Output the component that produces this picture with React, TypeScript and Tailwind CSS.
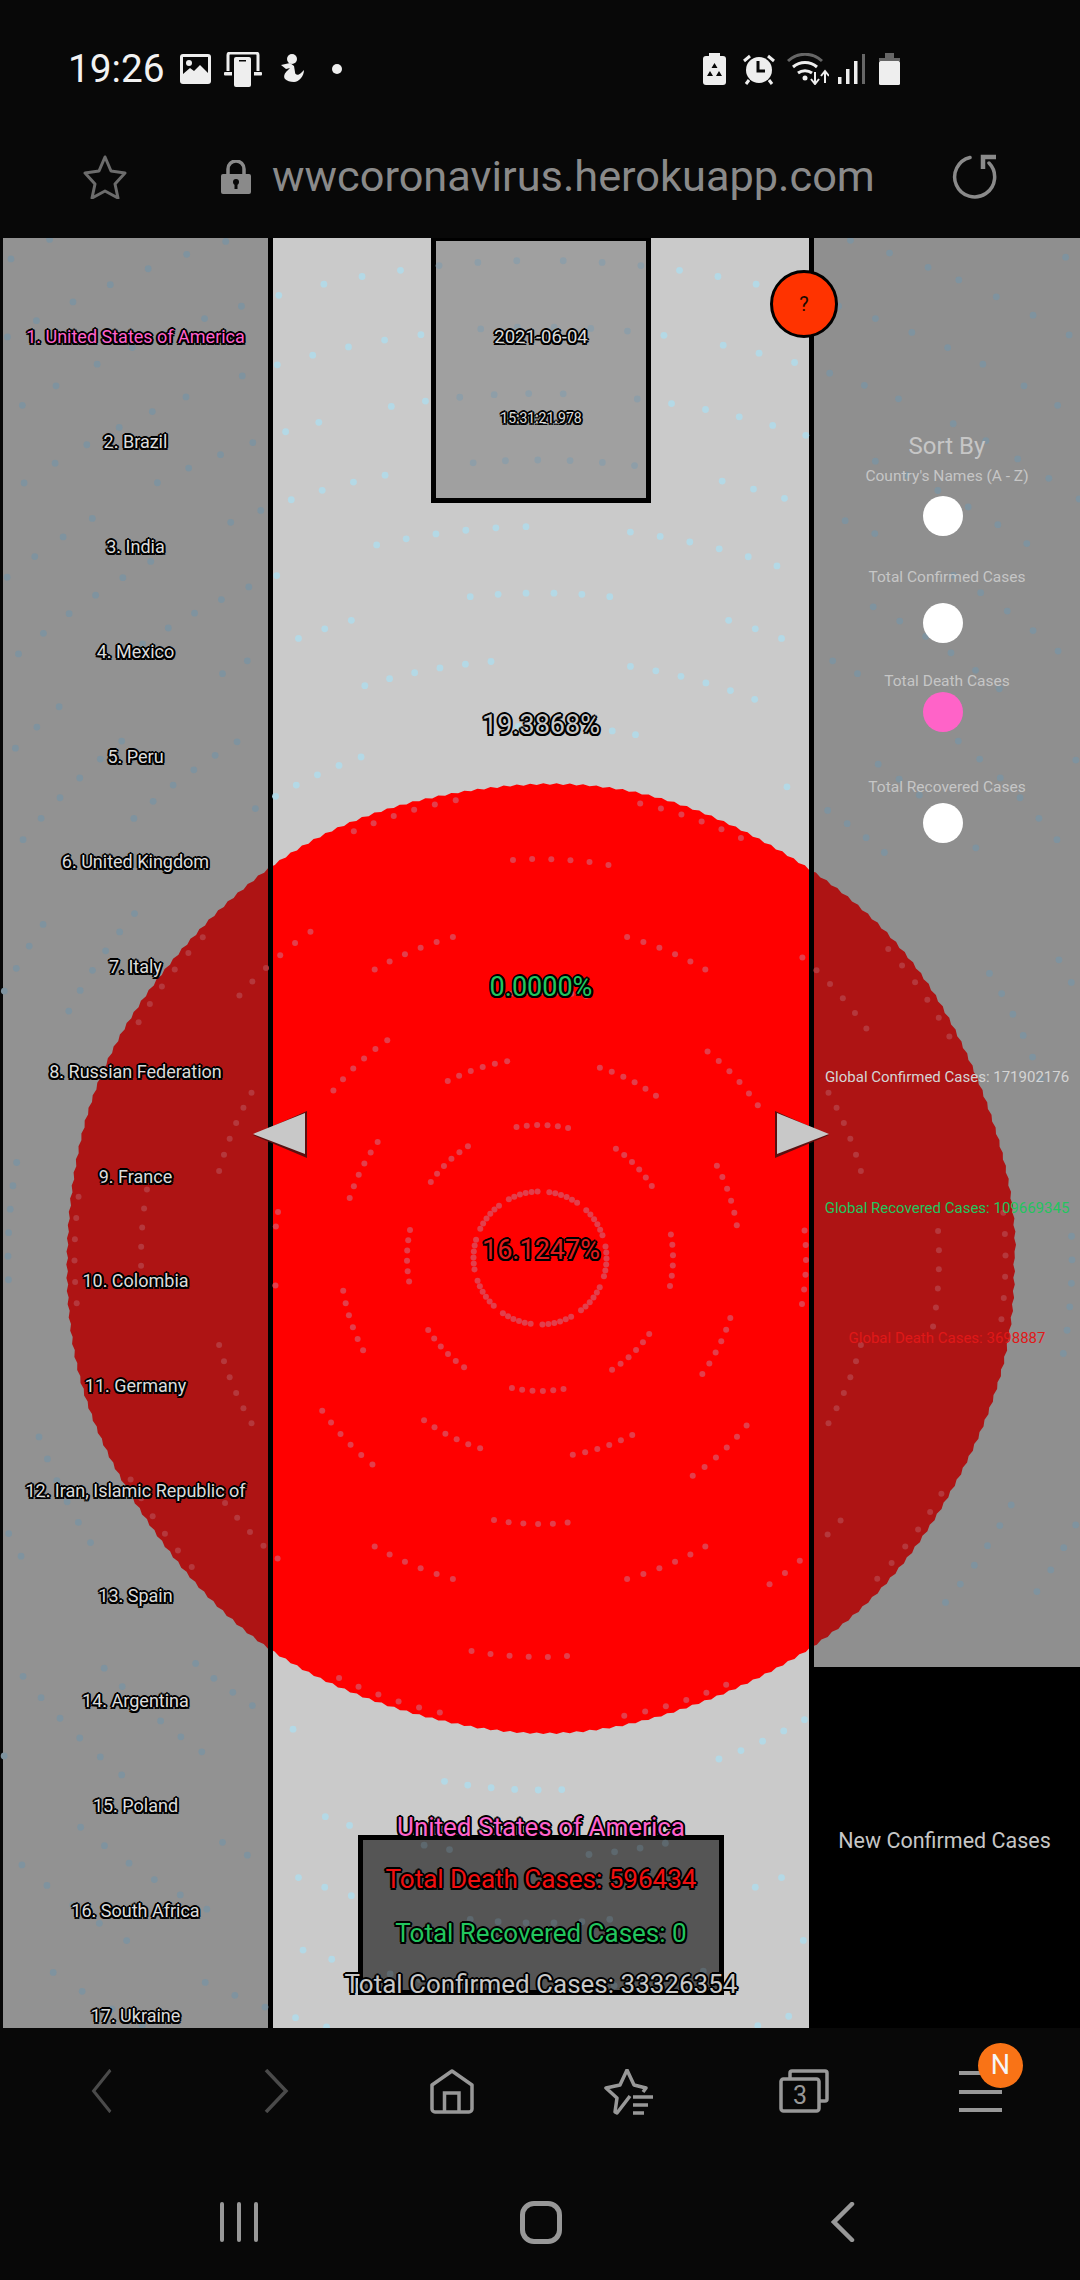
import React from "react";

const outline =
  "[text-shadow:2px_0_#000,-2px_0_#000,0_2px_#000,0_-2px_#000,1.5px_1.5px_#000,-1.5px_1.5px_#000,1.5px_-1.5px_#000,-1.5px_-1.5px_#000]";

const countries = [
  "1. United States of America",
  "2. Brazil",
  "3. India",
  "4. Mexico",
  "5. Peru",
  "6. United Kingdom",
  "7. Italy",
  "8. Russian Federation",
  "9. France",
  "10. Colombia",
  "11. Germany",
  "12. Iran, Islamic Republic of",
  "13. Spain",
  "14. Argentina",
  "15. Poland",
  "16. South Africa",
  "17. Ukraine",
];

// chart centre, in the coordinates of the main area
const CX = 540;
const CY = 1020;
const R = 474;

const circlePoints = (() => {
  const pts: string[] = [];
  const total = 450;
  for (let i = 0; i < total; i++) {
    const a = (i / total) * Math.PI * 2;
    const r = R + (i % 2 === 0 ? 0.8 : -0.8) + Math.sin(i * 0.13) * 1.4;
    pts.push(`${(CX + Math.cos(a) * r).toFixed(1)},${(CY + Math.sin(a) * r).toFixed(1)}`);
  }
  return pts.join(" ");
})();

function dotColor(x: number, y: number, inCircle: boolean) {
  if (x < 3 || x > 1080 || y < 0 || y > 1790) return null;
  if ((x > 266 && x < 275) || (x > 807 && x < 816)) return null;
  if (x > 809 && y > 1429) return null;
  const center = x > 273 && x < 809;
  if (inCircle) return center ? "#e23f4c" : "#b5383c";
  if (x > 427 && x < 655 && y < 269) {
    return x > 437 && x < 645 && y < 259 ? "#8e9ea8" : null;
  }
  if (x > 353 && x < 729 && y > 1592 && y < 1762) {
    return x > 363 && x < 719 && y > 1602 && y < 1752 ? "#5d686e" : null;
  }
  return center ? "#b4d9e6" : "#7f939f";
}

const dots = (() => {
  const out: { x: number; y: number; r: number; fill: string }[] = [];
  for (let k = 1; k <= 20; k++) {
    const ringR = k * 66.5;
    const n = k === 1 ? 10 : 8 + Math.max(0, k - 6) * 2;
    const spacing = k === 1 ? 6 : 6 + ringR * 0.033;
    const step = ((spacing / ringR) * 180) / Math.PI;
    const offset = k % 2 === 0 ? 0 : 180 / n;
    for (let d = 0; d < n; d++) {
      const mid = -90 + offset + (d * 360) / n + (k * 3) % 5;
      for (let i = 0; i < 6; i++) {
        const a = ((mid + (i - 2.5) * step) * Math.PI) / 180;
        const x = CX + Math.cos(a) * ringR;
        const y = CY + Math.sin(a) * ringR;
        const inCircle = ringR < R - 6;
        const fill = dotColor(x, y, inCircle);
        if (fill) out.push({ x, y, r: inCircle ? 3 : 3.4, fill });
      }
    }
  }
  return out;
})();

function Chart() {
  return (
    <svg className="absolute left-0 top-0 z-10 pointer-events-none" width={1080} height={1790}>
      <defs>
        <clipPath id="sides">
          <rect x={0} y={0} width={268} height={1790} />
          <rect x={814} y={0} width={266} height={1790} />
        </clipPath>
        <clipPath id="middle">
          <rect x={273} y={0} width={536} height={1790} />
        </clipPath>
      </defs>
      <polygon points={circlePoints} fill="#ae1414" clipPath="url(#sides)" />
      <polygon points={circlePoints} fill="#ff0000" clipPath="url(#middle)" />
      {dots.map((d, i) => (
        <circle key={i} cx={d.x} cy={d.y} r={d.r} fill={d.fill} />
      ))}
    </svg>
  );
}

function StatusLeft() {
  return (
    <>
      <svg width={31} height={30} viewBox="0 0 31 30" className="ml-[18px]">
        <rect width={31} height={30} rx={3} fill="#eee" />
        <rect x={3} y={3} width={25} height={22} fill="#080808" />
        <circle cx={9} cy={9} r={3} fill="#eee" />
        <path d="M3 20l7-6 4 3 6-6 8 8v8H3z" fill="#eee" />
      </svg>
      <svg width={38} height={35} viewBox="0 0 38 35" className="ml-[13px]">
        <path d="M4 19V3a2 2 0 0 1 2-2h26a2 2 0 0 1 2 2v16" fill="none" stroke="#eee" strokeWidth={3} />
        <rect x={0} y={20} width={38} height={3.5} rx={1} fill="#eee" />
        <rect x={8} y={4} width={22} height={31} rx={2} fill="#080808" />
        <rect x={10} y={5} width={17} height={30} rx={2} fill="#eee" />
        <rect x={15} y={8} width={7} height={1.5} fill="#080808" />
      </svg>
      <svg width={26} height={32} viewBox="0 0 26 32" className="ml-[16px]">
        <circle cx={14} cy={6} r={5} fill="#eee" />
        <path d="M3 12l9-2 4 3 1 6c0 3 3 4 6 1l3-3c0 6-5 12-10 12-4 0-7-1-9-3-2-3 0-6 2-8l3-3-4 1z" fill="#eee" />
      </svg>
      <span className="ml-[28px] w-[10px] h-[10px] rounded-full bg-[#eee]" />
    </>
  );
}

function StatusRight() {
  return (
    <div className="ml-auto mr-[180px] flex items-center">
      <svg width={23} height={32} viewBox="0 0 23 32">
        <rect x={6} y={0} width={11} height={4} fill="#eee" />
        <rect x={0} y={3} width={23} height={29} rx={3} fill="#eee" />
        <path d="M11.5 10l3 5h-6zM7 18l-3 5h6zM16 18l3 5h-6z" fill="#080808" />
      </svg>
      <svg width={34} height={32} viewBox="0 0 34 32" className="ml-[16px]">
        <circle cx={17} cy={17} r={13} fill="#eee" />
        <path d="M16 8v10h7" fill="none" stroke="#080808" strokeWidth={3} />
        <path d="M2 8l6-5M32 8l-6-5M7 27l-3 4M27 27l3 4" stroke="#eee" strokeWidth={3} />
      </svg>
      <svg width={42} height={32} viewBox="0 0 42 32" className="ml-[11px]">
        <path d="M1 8c10-9 24-9 34 0" fill="none" stroke="#666" strokeWidth={3} />
        <path d="M6 14c7-6 17-6 24 0M11 20c4-3 10-3 14 0" fill="none" stroke="#eee" strokeWidth={3} />
        <circle cx={18} cy={25} r={2.5} fill="#eee" />
        <path d="M28 19v11M24 26l4 5 4-5M38 30V19M34 23l4-5 4 5" fill="none" stroke="#eee" strokeWidth={2} />
      </svg>
      <svg width={27} height={30} viewBox="0 0 27 30" className="ml-[9px]">
        <rect x={0} y={23} width={3.5} height={7} fill="#eee" />
        <rect x={8} y={15} width={3.5} height={15} fill="#eee" />
        <rect x={16} y={7} width={3.5} height={23} fill="#eee" />
        <rect x={24} y={0} width={3} height={30} fill="#666" />
      </svg>
      <svg width={21} height={32} viewBox="0 0 21 32" className="ml-[14px]">
        <rect x={6} y={0} width={9} height={5} fill="#666" />
        <rect x={0} y={5} width={21} height={3} fill="#666" />
        <rect x={0} y={8} width={21} height={24} rx={1.5} fill="#eee" />
      </svg>
    </div>
  );
}

function UrlBar() {
  return (
    <div className="mt-[68px] h-[44px] pl-[83px] flex items-center">
      <svg width={44} height={44} viewBox="0 0 44 44" fill="none" stroke="#6c6c6c" strokeWidth={3}>
        <path d="M22 2l6 14 14 2-10 11 3 14-13-7-13 7 3-14L2 18l14-2z" strokeLinejoin="round" />
      </svg>
      <svg width={30} height={34} viewBox="0 0 30 34" className="ml-[94px]">
        <path d="M7 15V9a8 8 0 0 1 16 0v6" fill="none" stroke="#8a8a8a" strokeWidth={3.5} />
        <rect x={0} y={14} width={30} height={20} rx={2} fill="#8a8a8a" />
        <circle cx={15} cy={22} r={3} fill="#080808" />
        <rect x={13.5} y={23} width={3} height={6} fill="#080808" />
      </svg>
      <span className="ml-[21px] text-[43.3px] leading-[44px] text-[#8a8a8a] whitespace-nowrap">wwcoronavirus.herokuapp.com</span>
      <svg width={46} height={46} viewBox="0 0 46 46" fill="none" stroke="#8a8a8a" strokeWidth={3.5} className="ml-auto mr-[82px]">
        <path d="M18 3.5A20 20 0 1 0 37 9" strokeLinecap="round" />
        <path d="M44 3H31v12" strokeWidth={4.5} />
      </svg>
    </div>
  );
}

function BrowserIcons() {
  return (
    <div className="mt-[41px] h-[46px] pl-[89px] flex items-start">
      <svg width={24} height={44} viewBox="0 0 24 44" fill="none" stroke="#4a4a4a" strokeWidth={3.5}>
        <path d="M23 1L2 22l21 21" transform="matrix(.8 0 0 1 3 0)" />
      </svg>
      <svg width={25} height={44} viewBox="0 0 25 44" fill="none" stroke="#4a4a4a" strokeWidth={3.5} className="ml-[151px]">
        <path d="M2 1l20 21L2 43" />
      </svg>
      <svg width={44} height={46} viewBox="0 0 44 46" fill="none" stroke="#989898" strokeWidth={3.5} className="ml-[141px]">
        <path d="M22 2L2 16v24a3 3 0 0 0 3 3h34a3 3 0 0 0 3-3V16z" strokeLinejoin="round" />
        <path d="M14.5 43V24h14.500v19" />
      </svg>
      <svg width={50} height={46} viewBox="0 0 50 46" fill="none" stroke="#989898" strokeWidth={3.5} className="ml-[130px]">
        <path d="M26 27l-13 17-2-1 2-14L2 19l14-3 7-15 7 15 12 3-3 4" strokeLinejoin="round" />
        <path d="M29 28h20M29 36h15M29 44h11" />
      </svg>
      <svg width={50} height={44} viewBox="0 0 50 44" className="ml-[125px]">
        <path d="M11 9V4a2 2 0 0 1 2-2h33a2 2 0 0 1 2 2v26a2 2 0 0 1-2 2h-5" fill="none" stroke="#989898" strokeWidth={3.5} />
        <rect x={2} y={10} width={38} height={32} rx={2.5} fill="#080808" stroke="#989898" strokeWidth={3.5} />
        <text x={21} y={35} textAnchor="middle" fontSize={25} fill="#989898">3</text>
      </svg>
      <div className="relative ml-[130px] w-[43px] pt-[2px] flex flex-col gap-[14.5px]">
        <div className="h-[4px] bg-[#989898]" />
        <div className="h-[4px] bg-[#989898]" />
        <div className="h-[4px] bg-[#989898]" />
        <div className="absolute left-[19px] top-[-26px] w-[45px] h-[45px] rounded-full bg-[#f97316] text-[#f5f5f5] text-[27px] flex items-center justify-center">N</div>
      </div>
    </div>
  );
}

function NavBar() {
  return (
    <div className="mt-[85px] h-[44px] pl-[220px] flex items-center">
      <div className="h-[40px] flex gap-[13px]">
        <div className="w-[4px] h-full rounded-full bg-[#989898]" />
        <div className="w-[4px] h-full rounded-full bg-[#989898]" />
        <div className="w-[4px] h-full rounded-full bg-[#989898]" />
      </div>
      <div className="ml-[262px] w-[42px] h-[43px] rounded-[14px] border-[5px] border-[#989898]" />
      <svg width={24} height={40} viewBox="0 0 24 40" fill="none" stroke="#989898" strokeWidth={4.5} strokeLinecap="round" className="ml-[269px]">
        <path d="M21 2L3 20l18 18" />
      </svg>
    </div>
  );
}

function SortOption({ label, className, dot, dotClass }: { label: string; className: string; dot: string; dotClass: string }) {
  return (
    <>
      <p className={`relative z-20 h-[20px] leading-[20px] text-[15.5px] text-[#c6c6c6] whitespace-nowrap ${className}`}>{label}</p>
      <div className={`relative z-20 w-[40px] h-[40px] rounded-full mr-[8px] ${dot} ${dotClass}`} />
    </>
  );
}

export default function App() {
  return (
    <div className="w-[1080px] h-[2280px] bg-[#080808] overflow-hidden flex flex-col [font-family:Roboto,sans-serif]">
      <header className="h-[238px] pt-[51px]">
        <div className="h-[36px] pl-[68px] flex items-center">
          <span className="text-[38.8px] leading-[36px] text-[#f2f2f2] w-[94px] whitespace-nowrap">19:26</span>
          <StatusLeft />
          <StatusRight />
        </div>
        <UrlBar />
      </header>

      <main className="relative h-[1790px] flex">
        <Chart />

        <aside className="ml-[3px] w-[270px] h-full bg-[#929292] border-r-[5px] border-black overflow-hidden pt-[46.5px]">
          {countries.map((c, i) => (
            <div key={c} className="h-[104.9px] flex items-center justify-center">
              <span
                className={`relative z-20 text-[18px] whitespace-nowrap ${outline} ${i === 0 ? "text-[#ff62cc]" : "text-[#dcdcdc]"}`}
              >
                {c}
              </span>
            </div>
          ))}
        </aside>

        <section className="w-[536px] h-full bg-[#cacaca] flex flex-col items-center">
          <div className="w-[220px] h-[265px] shrink-0 bg-[#a0a0a0] border-[5px] border-t-[3px] border-black flex flex-col items-center">
            <span className={`relative z-20 mt-[84px] h-[24px] leading-[24px] text-[18.5px] text-[#dcdcdc] ${outline}`}>2021-06-04</span>
            <span className={`relative z-20 mt-[59px] h-[20px] leading-[20px] text-[14px] text-[#dcdcdc] ${outline}`}>15:31:21.978</span>
          </div>
          <span className={`relative z-20 mt-[207px] h-[30px] leading-[30px] text-[27px] text-[#c8c8c8] ${outline}`}>19.3868%</span>
          <span className={`relative z-20 mt-[232px] h-[30px] leading-[30px] text-[27px] text-[#22c55e] ${outline}`}>0.0000%</span>
          <span className={`relative z-20 mt-[233px] h-[30px] leading-[30px] text-[27px] text-[#e01c1c] ${outline}`}>16.1247%</span>
          <span className={`relative z-20 mt-[547px] h-[23px] leading-[30px] text-[26px] text-[#ff62cc] whitespace-nowrap ${outline}`}>United States of America</span>
          <div className="w-[366px] h-[160px] shrink-0 bg-[#555555] border-[5px] border-black flex flex-col items-center pt-[24px] whitespace-nowrap">
            <span className={`relative z-20 h-[30px] leading-[30px] text-[26px] text-[#f01010] ${outline}`}>Total Death Cases: 596434</span>
            <span className={`relative z-20 mt-[24px] h-[30px] leading-[30px] text-[26px] text-[#22c55e] ${outline}`}>Total Recovered Cases: 0</span>
            <span className={`relative z-20 mt-[21px] h-[30px] leading-[30px] text-[26px] text-[#c8c8c8] ${outline}`}>Total Confirmed Cases: 33326354</span>
          </div>
        </section>

        <aside className="flex-1 h-full flex flex-col">
          <div className="h-[1429px] bg-[#8f8f8f] border-l-[5px] border-black flex flex-col items-center pt-[193px]">
            <p className="relative z-20 h-[30px] leading-[30px] text-[24px] text-[#c6c6c6]">Sort By</p>
            <p className="relative z-20 mt-[5px] h-[20px] leading-[20px] text-[15.5px] text-[#c6c6c6] whitespace-nowrap">Country's Names (A - Z)</p>
            <div className="relative z-20 mt-[10px] w-[40px] h-[40px] rounded-full mr-[8px] bg-white" />
            <SortOption label="Total Confirmed Cases" className="mt-[31px]" dot="mt-[16px]" dotClass="bg-white" />
            <SortOption label="Total Death Cases" className="mt-[28px]" dot="mt-[1px]" dotClass="bg-[#ff63c8]" />
            <SortOption label="Total Recovered Cases" className="mt-[45px]" dot="mt-[6px]" dotClass="bg-white" />
            <p className="relative z-20 mt-[224px] h-[20px] leading-[20px] text-[15px] text-[#d4d4d4] whitespace-nowrap">Global Confirmed Cases: 171902176</p>
            <p className="relative z-20 mt-[111px] h-[20px] leading-[20px] text-[15px] text-[#22c55e] whitespace-nowrap">Global Recovered Cases: 109669345</p>
            <p className="relative z-20 mt-[110px] h-[20px] leading-[20px] text-[15px] text-[#e01818] whitespace-nowrap">Global Death Cases: 3698887</p>
          </div>
          <div className="relative z-20 flex-1 bg-black flex items-center justify-center pb-[12px]">
            <span className="text-[21.5px] text-[#c6c6c6] whitespace-nowrap">New Confirmed Cases</span>
          </div>
        </aside>

        <div className="absolute z-20 left-[770px] top-[32px] w-[68px] h-[68px] rounded-full bg-[#ff3300] border-[3px] border-black flex items-center justify-center text-[20px] text-[#1a0a00]">?</div>
        <svg className="absolute z-20 left-[252px] top-[873px]" width={56} height={48} viewBox="0 0 56 48">
          <path d="M55 0v47L1 24z" fill="#5a1010" />
          <path d="M53 2v41L1 23z" fill="#c8c8c8" />
        </svg>
        <svg className="absolute z-20 left-[774px] top-[873px]" width={56} height={48} viewBox="0 0 56 48">
          <path d="M1 0v47l54-23z" fill="#5a1010" />
          <path d="M3 2v41l52-20z" fill="#c8c8c8" />
        </svg>
      </main>

      <footer className="h-[252px]">
        <BrowserIcons />
        <NavBar />
      </footer>
    </div>
  );
}
